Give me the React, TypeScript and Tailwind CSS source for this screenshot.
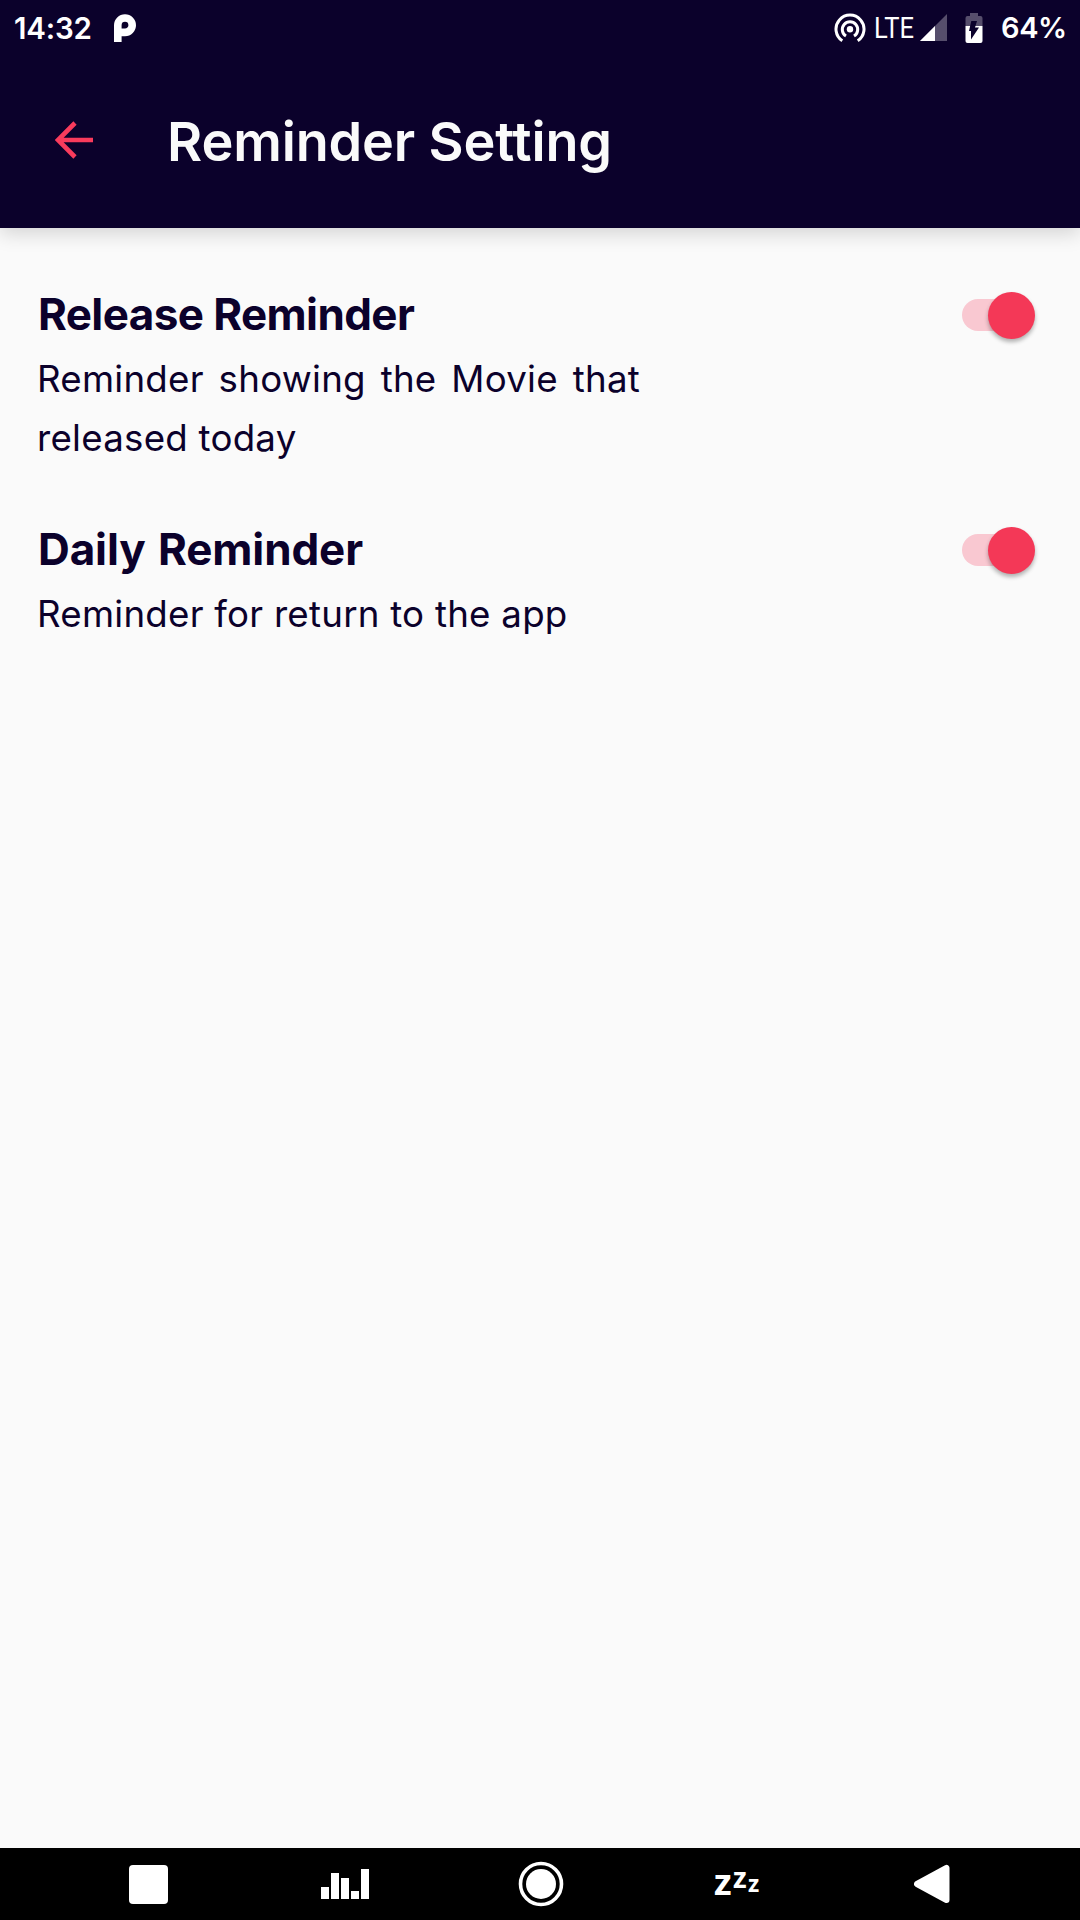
type SettingProps = {
  title: string;
  titleClass: string;
  text: string;
};

function Toggle() {
  return (
    <button
      role="switch"
      aria-checked="true"
      className="mt-[7px] flex h-8 w-[66px] shrink-0 items-center justify-end rounded-full bg-[#f9c8d1]"
    >
      <span className="mt-px -mr-[7px] h-[47px] w-[47px] shrink-0 rounded-full bg-[#f43857] shadow-[0_3px_4px_rgba(0,0,0,0.3)]" />
    </button>
  );
}

function Setting({ title, titleClass, text }: SettingProps) {
  return (
    <div className="flex items-start justify-between pr-[52px] pl-[37px]">
      <div className="w-[603px]">
        <h2 className={`ml-px text-[44px] leading-[44px] font-bold whitespace-nowrap ${titleClass}`}>{title}</h2>
        <p className="mt-[13px] text-justify text-[36.7px] leading-[59px] tracking-[0.24px]">{text}</p>
      </div>
      <Toggle />
    </div>
  );
}

function StatusBar() {
  return (
    <div className="flex h-14 items-center justify-between pr-[14px] pl-[14px] text-white">
      <div className="flex items-center">
        <span className="w-[99px] text-[29.5px] leading-[56px] font-semibold tracking-[-0.2px]">14:32</span>
        <svg className="h-[30px] w-6" viewBox="0 0 24 30" fill="none">
          <path d="M4.8 29V12.2A7.2 7.2 0 1 1 12 19.4H8.5" stroke="#fff" strokeWidth="7.6" />
        </svg>
      </div>
      <div className="flex items-center">
        <svg className="h-[30px] w-8" viewBox="0 0 32 30" fill="none" stroke="#fff" strokeWidth="3">
          <circle cx="16" cy="16.2" r="3.2" fill="#fff" stroke="none" />
          <path d="M12 23A7.7 7.7 0 1 1 20 23" />
          <path d="M8.3 27.8A14 14 0 1 1 23.7 27.8" />
        </svg>
        <span className="ml-2 w-[46px] origin-left scale-x-[0.88] font-['Roboto',sans-serif] text-[29px] leading-[56px]">
          LTE
        </span>
        <svg className="h-7 w-7" viewBox="0 0 28 28">
          <path d="M27 0V27H0Z" fill="#564e6c" />
          <path d="M15 12V27H0Z" fill="#fff" />
        </svg>
        <svg className="ml-[17px] h-[30px] w-[18px]" viewBox="0 0 18 30">
          <path d="M5 0h8v3h2.500a2 2 0 0 1 2 2v8H.5V5a2 2 0 0 1 2-2H5Z" fill="#564e6c" />
          <path d="M.5 13h17v15a2 2 0 0 1-2 2h-13a2 2 0 0 1-2-2Z" fill="#fff" />
          <path d="M6.300 8h5.700l-2 6.500h4L6 26.500V18H4Z" fill="#0b012b" />
        </svg>
        <span className="ml-[18px] w-[65px] text-[29px] leading-[56px] font-semibold tracking-[-0.4px]">64%</span>
      </div>
    </div>
  );
}

function AppBar() {
  return (
    <div className="flex h-[172px] items-start pt-[42px] pl-[55px]">
      <button aria-label="Back" className="mt-[23px]">
        <svg className="h-[38px] w-[38px]" viewBox="0 0 38 38" fill="none" stroke="#f93b5c" strokeWidth="4.600">
          <path d="M38 19H4M20 2L3 19L20 36" />
        </svg>
      </button>
      <h1 className="mt-[2px] ml-[74px] text-[54px] leading-[84px] font-semibold tracking-[-0.15px] text-[#fafafa]">
        Reminder Setting
      </h1>
    </div>
  );
}

function NavigationBar() {
  return (
    <nav className="flex h-[72px] items-center bg-black pl-[129px]">
      <div className="h-[39px] w-[39px] rounded-[4px] bg-white" />
      <div className="ml-[153px] flex h-[30px] items-end gap-[2px]">
        <div className="h-3 w-2 bg-white" />
        <div className="h-[26px] w-2 bg-white" />
        <div className="h-[21px] w-2 bg-white" />
        <div className="h-2 w-2 bg-white" />
        <div className="h-[30px] w-2 bg-white" />
      </div>
      <svg className="ml-[149px] h-[46px] w-[46px]" viewBox="0 0 46 46">
        <circle cx="23" cy="23" r="20.500" fill="none" stroke="#fff" strokeWidth="3.600" />
        <circle cx="23" cy="23" r="15" fill="#fff" />
      </svg>
      <div className="ml-[150px] flex h-[72px] w-[50px] items-start font-['Open_Sans',sans-serif] font-bold text-white">
        <span className="mt-[9px] w-[19px] text-[36px] leading-[50px]">z</span>
        <span className="mt-[4px] w-[15px] text-[28px] leading-[50px]">z</span>
        <span className="mt-[10px] text-[23px] leading-[50px]">z</span>
      </div>
      <svg className="ml-[150px] h-10 w-9" viewBox="0 0 36 40">
        <path d="M3 20L32.500 4V36Z" fill="#fff" stroke="#fff" strokeWidth="6" strokeLinejoin="round" />
      </svg>
    </nav>
  );
}

export default function App() {
  return (
    <div className="flex h-[1920px] w-[1080px] flex-col overflow-hidden bg-[#fafafa] font-['Inter',sans-serif] text-[#0b012b]">
      <header className="h-[228px] shrink-0 bg-[#0b012b] shadow-[0_6px_18px_rgba(0,0,0,0.15)]">
        <StatusBar />
        <AppBar />
      </header>
      <main className="flex flex-1 flex-col gap-[60px] pt-[64px]">
        <Setting
          title="Release Reminder"
          titleClass="tracking-[-0.6px]"
          text="Reminder showing the Movie that released today"
        />
        <Setting
          title="Daily Reminder"
          titleClass="tracking-[-0.1px] [word-spacing:2px]"
          text="Reminder for return to the app"
        />
      </main>
      <NavigationBar />
    </div>
  );
}
